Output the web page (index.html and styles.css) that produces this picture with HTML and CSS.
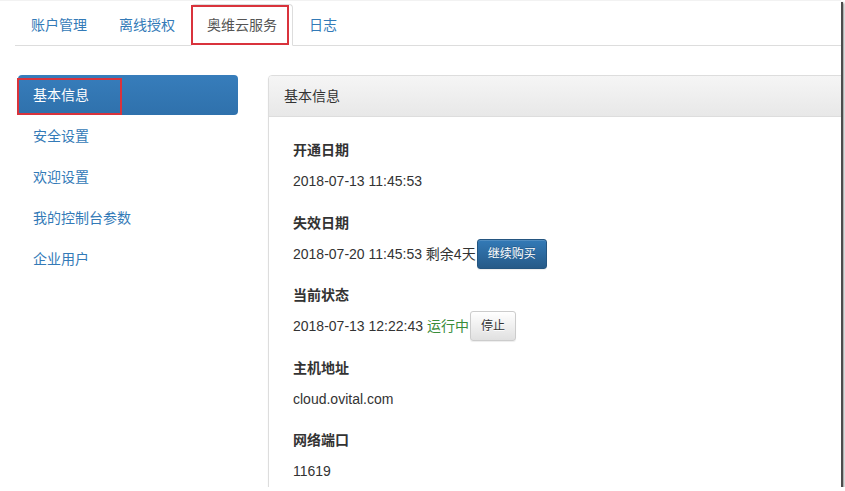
FILE: index.html
```html
<!DOCTYPE html>
<html lang="zh-CN">

<head>
    <meta charset="UTF-8">
    <title>奥维云服务</title>
    <link rel="stylesheet" href="styles.css">
</head>

<body>
    <div class="shot">
        <ul class="tabs">
            <li><a href="#">账户管理</a></li>
            <li><a href="#">离线授权</a></li>
            <li class="active"><a href="#">奥维云服务</a><span class="mark mark-tab"></span></li>
            <li><a href="#">日志</a></li>
        </ul>

        <div class="main">
            <ul class="side">
                <li class="active"><a href="#">基本信息</a><span class="mark mark-side"></span></li>
                <li><a href="#">安全设置</a></li>
                <li><a href="#">欢迎设置</a></li>
                <li><a href="#">我的控制台参数</a></li>
                <li><a href="#">企业用户</a></li>
            </ul>

            <div class="panel">
                <div class="panel-heading">基本信息</div>
                <div class="panel-body">
                    <div class="field">
                        <div class="field-label">开通日期</div>
                        <div class="field-value">2018-07-13 11:45:53</div>
                    </div>
                    <div class="field">
                        <div class="field-label">失效日期</div>
                        <div class="field-value">
                            <span>2018-07-20 11:45:53 剩余4天</span>
                            <button class="btn btn-primary">继续购买</button>
                        </div>
                    </div>
                    <div class="field">
                        <div class="field-label">当前状态</div>
                        <div class="field-value">
                            <span>2018-07-13 12:22:43 <span class="running">运行中</span></span>
                            <button class="btn btn-default">停止</button>
                        </div>
                    </div>
                    <div class="field">
                        <div class="field-label">主机地址</div>
                        <div class="field-value">cloud.ovital.com</div>
                    </div>
                    <div class="field">
                        <div class="field-label">网络端口</div>
                        <div class="field-value">11619</div>
                    </div>
                </div>
            </div>
        </div>
    </div>
</body>

</html>
```

FILE: styles.css
```css
html,
body {
    margin: 0;
    padding: 0;
    background: #ffffff;
    overflow: hidden;
}

body,
button {
    font-family: "Liberation Sans", "Noto Sans CJK SC", sans-serif;
    font-size: 14px;
    line-height: 20px;
    color: #333;
}

.shot {
    position: relative;
    width: 841px;
    height: 487px;
    overflow: hidden;
    background: #fff;
    border-top: 1px solid #f2f2f2;
    box-sizing: border-box;
    box-shadow: 2px 2px 0 #4d4d4d, 3px 3px 2px rgba(0, 0, 0, 0.45);
}

a {
    color: #337ab7;
    text-decoration: none;
}

/* top tabs */
.tabs {
    display: flex;
    list-style: none;
    margin: 3px 0 0 15px;
    padding: 0;
    border-bottom: 1px solid #ddd;
}

.tabs li {
    position: relative;
    margin-bottom: -1px;
}

.tabs a {
    display: block;
    padding: 10px 15px;
    border: 1px solid transparent;
    border-radius: 4px 4px 0 0;
}

.tabs .active a {
    color: #555;
    background: #fff;
    border-color: #ddd #ddd transparent;
}

/* red annotation boxes */
.mark {
    position: absolute;
    border: 2px solid #d9333c;
    box-sizing: border-box;
    pointer-events: none;
}

.mark-tab {
    left: 0;
    top: 1px;
    width: 98px;
    height: 40px;
}

.mark-side {
    left: -1px;
    top: 3px;
    width: 105px;
    height: 37px;
}

/* body */
.main {
    display: flex;
    align-items: flex-start;
    margin-top: 29px;
    padding-left: 18px;
}

.side {
    flex-shrink: 0;
    width: 220px;
    list-style: none;
    margin: 0;
    padding: 0;
}

.side li {
    position: relative;
}

.side li+li {
    margin-top: 1px;
}

.side a {
    display: block;
    padding: 10px 15px;
    border-radius: 4px;
}

.side .active a {
    color: #fff;
    background: linear-gradient(to bottom, #377dbb, #2f71ac);
}

.panel {
    flex-shrink: 0;
    width: 700px;
    margin-left: 30px;
    border: 1px solid #ddd;
    border-radius: 4px;
    background: #fff;
    box-shadow: 0 1px 2px rgba(0, 0, 0, 0.05);
}

.panel-heading {
    padding: 10px 15px;
    border-bottom: 1px solid #ddd;
    border-radius: 3px 3px 0 0;
    background: linear-gradient(to bottom, #f5f5f5, #e8e8e8);
}

.panel-body {
    padding: 23px 24px;
}

.field+.field {
    margin-top: 16.5px;
}

.field-label {
    font-weight: bold;
    margin-bottom: 6px;
}

.field-value {
    display: flex;
    align-items: center;
    gap: 1px;
    min-height: 30px;
}

.running {
    color: #3a8d3a;
}

.btn {
    display: inline-block;
    padding: 5px 10px;
    font-size: 12px;
    line-height: 18px;
    border: 1px solid transparent;
    border-radius: 3px;
    cursor: pointer;
}

.btn-primary {
    color: #fff;
    background: linear-gradient(to bottom, #337ab7, #265a88);
    border-color: #245580;
    text-shadow: 0 -1px 0 rgba(0, 0, 0, 0.2);
    box-shadow: inset 0 1px 0 rgba(255, 255, 255, 0.15), 0 1px 1px rgba(0, 0, 0, 0.075);
}

.btn-default {
    color: #333;
    background: linear-gradient(to bottom, #fff, #e0e0e0);
    border-color: #ccc;
    text-shadow: 0 1px 0 #fff;
    box-shadow: inset 0 1px 0 rgba(255, 255, 255, 0.15), 0 1px 1px rgba(0, 0, 0, 0.075);
}
```
